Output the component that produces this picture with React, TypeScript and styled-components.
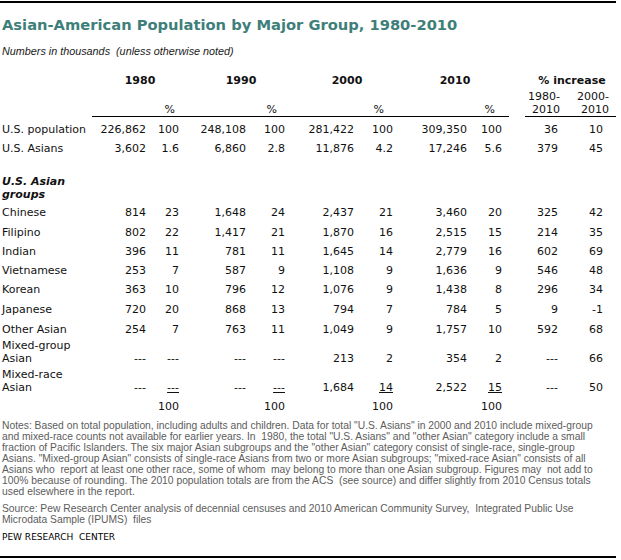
import styled, { createGlobalStyle } from "styled-components";

const GlobalStyle = createGlobalStyle`
  body {
    margin: 0;
    background: #fff;
  }
`;

const Figure = styled.div`
  width: 616px;
  margin-top: 1px;
  border-top: 2px solid #000;
  border-bottom: 2px solid #000;
  padding-bottom: 13px;
`;

const Title = styled.h1`
  margin: 13px 0 0 2px;
  font: bold 14.7px/18px "DejaVu Sans", Verdana, sans-serif;
  color: #3e7f7a;
  white-space: nowrap;
`;

const Subtitle = styled.div`
  margin: 11px 0 0 2px;
  font: italic 10.8px/13px "Liberation Sans", Arial, sans-serif;
  color: #1a1a1a;
`;

const Table = styled.table`
  margin-left: 2px;
  width: 614px;
  table-layout: fixed;
  border-collapse: separate;
  border-spacing: 0;
  font: 11px/13px "DejaVu Sans", Verdana, sans-serif;
  color: #111;
`;

const Col = styled.col<{ $w: number }>`
  width: ${p => p.$w}px;
`;

const YearHead = styled.th<{ $shift: number }>`
  height: 29px;
  padding: 0 0 0 ${p => p.$shift}px;
  vertical-align: bottom;
  text-align: center;
  font-weight: bold;
  white-space: nowrap;
`;

const SubHead = styled.th<{ $pad: number; $rule: boolean }>`
  height: 29px;
  padding: 0 ${p => p.$pad}px 0 0;
  vertical-align: bottom;
  text-align: right;
  font-weight: normal;
  border-bottom: ${p => (p.$rule ? "1px solid #000" : "none")};
`;

const Label = styled.td<{ $h: number; $group?: boolean }>`
  height: ${p => p.$h}px;
  padding: 0;
  vertical-align: bottom;
  white-space: nowrap;
  font-weight: ${p => (p.$group ? "bold" : "normal")};
  font-style: ${p => (p.$group ? "italic" : "normal")};
`;

const Num = styled.td<{ $pad: number; $u?: boolean }>`
  padding: 0 ${p => p.$pad}px 0 0;
  vertical-align: bottom;
  text-align: right;
  white-space: nowrap;
  text-decoration: ${p => (p.$u ? "underline" : "none")};
`;

const Gap = styled.td`
  padding: 0;
`;

const Notes = styled.div<{ $top: number }>`
  margin: ${p => p.$top}px 0 0 2px;
  font: 10.3px/11px "Liberation Sans", Arial, sans-serif;
  color: #5c5c5c;
  white-space: pre;
`;

const Credit = styled.div`
  margin: 6px 0 0 2px;
  font: 9px/12px "DejaVu Sans", Verdana, sans-serif;
  color: #000;
  white-space: pre;
`;

// column widths; the data cells carry their own right padding
const cols = [90, 54, 33, 67, 39, 69, 39, 74, 42, 16, 37, 54];
const dataPads = [0, 0, 0, 0, 0, 0, 0, 7];

type Row = { label: string[]; h: number; vals?: string[]; group?: boolean };

const rows: Row[] = [
  { label: ["U.S. population"], h: 19, vals: ["226,862", "100", "248,108", "100", "281,422", "100", "309,350", "100", "36", "10"] },
  { label: ["U.S. Asians"], h: 19, vals: ["3,602", "1.6", "6,860", "2.8", "11,876", "4.2", "17,246", "5.6", "379", "45"] },
  { label: ["U.S. Asian", "groups"], h: 46, group: true },
  { label: ["Chinese"], h: 18, vals: ["814", "23", "1,648", "24", "2,437", "21", "3,460", "20", "325", "42"] },
  { label: ["Filipino"], h: 20, vals: ["802", "22", "1,417", "21", "1,870", "16", "2,515", "15", "214", "35"] },
  { label: ["Indian"], h: 19, vals: ["396", "11", "781", "11", "1,645", "14", "2,779", "16", "602", "69"] },
  { label: ["Vietnamese"], h: 19, vals: ["253", "7", "587", "9", "1,108", "9", "1,636", "9", "546", "48"] },
  { label: ["Korean"], h: 19, vals: ["363", "10", "796", "12", "1,076", "9", "1,438", "8", "296", "34"] },
  { label: ["Japanese"], h: 20, vals: ["720", "20", "868", "13", "794", "7", "784", "5", "9", "-1"] },
  { label: ["Other Asian"], h: 20, vals: ["254", "7", "763", "11", "1,049", "9", "1,757", "10", "592", "68"] },
  { label: ["Mixed-group", "Asian"], h: 29, vals: ["---", "---", "---", "---", "213", "2", "354", "2", "---", "66"] },
  { label: ["Mixed-race", "Asian"], h: 29, vals: ["---", "_---", "---", "_---", "1,684", "_14", "2,522", "_15", "---", "50"] },
  { label: [""], h: 19, vals: ["", "100", "", "100", "", "100", "", "100", "", ""] },
];

const years = [
  { t: "1980", shift: 9 },
  { t: "1990", shift: 18 },
  { t: "2000", shift: 16 },
  { t: "2010", shift: 8 },
];

const notes = `Notes: Based on total population, including adults and children. Data for total "U.S. Asians" in 2000 and 2010 include mixed-group
and mixed-race counts not available for earlier years. In  1980, the total "U.S. Asians" and "other Asian" category include a small
fraction of Pacific Islanders. The six major Asian subgroups and the "other Asian" category consist of single-race, single-group
Asians. "Mixed-group Asian" consists of single-race Asians from two or more Asian subgroups; "mixed-race Asian" consists of all
Asians who  report at least one other race, some of whom  may belong to more than one Asian subgroup. Figures may  not add to
100% because of rounding. The 2010 population totals are from the ACS  (see source) and differ slightly from 2010 Census totals
used elsewhere in the report.`;

const source = `Source: Pew Research Center analysis of decennial censuses and 2010 American Community Survey,  Integrated Public Use
Microdata Sample (IPUMS)  files`;

function NumCell({ v, pad }: { v: string; pad: number }) {
  const u = v.startsWith("_");
  return <Num $pad={pad} $u={u}>{u ? v.slice(1) : v}</Num>;
}

function DataRow({ row }: { row: Row }) {
  const vals = row.vals ?? [];
  return (
    <tr>
      <Label $h={row.h} $group={row.group}>
        {row.label.map((l, i) => (
          <span key={i}>
            {i > 0 && <br />}
            {l}
          </span>
        ))}
      </Label>
      {row.vals ? (
        <>
          {vals.slice(0, 8).map((v, i) => (
            <NumCell key={i} v={v} pad={dataPads[i]} />
          ))}
          <Gap />
          <NumCell v={vals[8]} pad={4} />
          <NumCell v={vals[9]} pad={13} />
        </>
      ) : (
        <td colSpan={11} />
      )}
    </tr>
  );
}

export default function App() {
  const pctPads = [4, 8, 9, 14];
  return (
    <>
      <GlobalStyle />
      <Figure>
        <Title>Asian-American Population by Major Group, 1980-2010</Title>
        <Subtitle>Numbers in thousands&nbsp; (unless otherwise noted)</Subtitle>
        <Table>
          <colgroup>
            {cols.map((w, i) => (
              <Col key={i} $w={w} />
            ))}
          </colgroup>
          <thead>
            <tr>
              <YearHead $shift={0} />
              {years.map(y => (
                <YearHead key={y.t} colSpan={2} $shift={y.shift}>
                  {y.t}
                </YearHead>
              ))}
              <YearHead $shift={0} />
              <YearHead colSpan={2} $shift={3}>
                % increase
              </YearHead>
            </tr>
            <tr>
              <SubHead $pad={0} $rule={false} />
              {pctPads.flatMap((p, i) => [
                <SubHead key={`n${i}`} $pad={0} $rule={true} />,
                <SubHead key={`p${i}`} $pad={p} $rule={true}>
                  %
                </SubHead>,
              ])}
              <SubHead $pad={0} $rule={false} />
              <SubHead $pad={2} $rule={true}>
                1980-
                <br />
                2010
              </SubHead>
              <SubHead $pad={7} $rule={true}>
                2000-
                <br />
                2010
              </SubHead>
            </tr>
          </thead>
          <tbody>
            {rows.map((r, i) => (
              <DataRow key={i} row={r} />
            ))}
          </tbody>
        </Table>
        <Notes $top={7}>{notes}</Notes>
        <Notes $top={6}>{source}</Notes>
        <Credit>PEW RESEARCH  CENTER</Credit>
      </Figure>
    </>
  );
}
